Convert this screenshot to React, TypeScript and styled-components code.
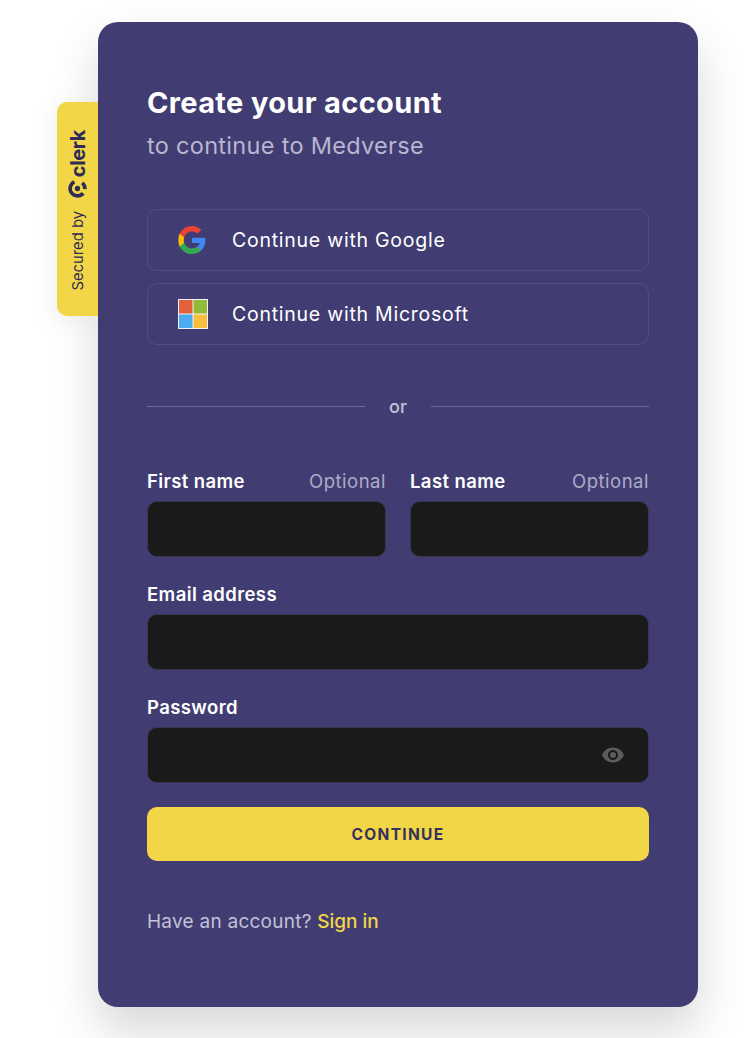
import React from "react";
import styled, { createGlobalStyle } from "styled-components";

const GlobalStyle = createGlobalStyle`
  html, body {
    margin: 0;
    padding: 0;
    background: #fff;
    overflow: hidden;
  }
  body {
    font-family: Inter, "Liberation Sans", sans-serif;
  }
`;

const Page = styled.div`
  height: 1038px;
  padding: 22px 0 0 98px;
  box-sizing: border-box;
`;

const Card = styled.div`
  position: relative;
  width: 600px;
  height: 985px;
  box-sizing: border-box;
  padding: 64px 49px 0;
  background: #413d72;
  border-radius: 20px;
  box-shadow: 0 24px 48px rgba(0, 0, 0, 0.16);
`;

const Badge = styled.div`
  position: absolute;
  left: -41px;
  top: 80px;
  width: 41px;
  height: 214px;
  box-sizing: border-box;
  padding-top: 28px;
  display: flex;
  align-items: center;
  flex-direction: column;
  background: #f3d647;
  border-radius: 10px 0 0 10px;
  color: #2f2c55;
  box-shadow: -6px 4px 24px rgba(0, 0, 0, 0.06);
`;

const BadgeBrand = styled.span`
  writing-mode: vertical-rl;
  transform: rotate(180deg);
  font-size: 20px;
  line-height: 20px;
  font-weight: 700;
  letter-spacing: -0.4px;
`;

const BadgeMark = styled.span`
  display: flex;
  flex-shrink: 0;
  margin: 2px 0 13px;
`;

const BadgeText = styled.span`
  writing-mode: vertical-rl;
  transform: rotate(180deg);
  font-size: 14.8px;
  line-height: 16px;
  white-space: nowrap;
`;

const Title = styled.h1`
  margin: 0;
  font-size: 29px;
  line-height: 34px;
  font-weight: 700;
  letter-spacing: 0.35px;
  color: #fff;
`;

const Subtitle = styled.p`
  margin: 12px 0 0;
  font-size: 23.5px;
  line-height: 28px;
  letter-spacing: 0.3px;
  color: #b9b6d1;
`;

const Socials = styled.div`
  margin-top: 49px;
  display: flex;
  flex-direction: column;
  gap: 12px;
`;

const SocialButton = styled.button`
  display: flex;
  align-items: center;
  gap: 24px;
  height: 62px;
  padding: 0 0 0 30px;
  background: transparent;
  border: 1px solid #524e80;
  border-radius: 10px;
  color: #fff;
  font-family: inherit;
  font-size: 19.5px;
  letter-spacing: 0.75px;
`;

const IconSlot = styled.span`
  display: flex;
  width: 30px;
  justify-content: flex-start;
`;

const Divider = styled.div`
  margin-top: 49px;
  display: flex;
  align-items: center;
  gap: 24px;
  height: 24px;
  color: #c3c1d8;
  font-size: 18px;
  font-weight: 500;
`;

const Rule = styled.span`
  flex: 1;
  height: 1px;
  background: #6c6992;
`;

const Form = styled.div`
  margin-top: 51px;
  display: flex;
  flex-direction: column;
  gap: 25px;
`;

const NameRow = styled.div`
  display: grid;
  grid-template-columns: 1fr 1fr;
  gap: 24px;
`;

const Field = styled.div`
  display: flex;
  flex-direction: column;
  gap: 8px;
`;

const LabelRow = styled.div`
  display: flex;
  justify-content: space-between;
  align-items: baseline;
  height: 24px;
  line-height: 24px;
`;

const Label = styled.label`
  font-size: 18.5px;
  font-weight: 600;
  letter-spacing: 0.4px;
  color: #fff;
`;

const Optional = styled.span`
  font-size: 18.5px;
  letter-spacing: 0.5px;
  color: #aeabc8;
`;

const InputBox = styled.div`
  position: relative;
  height: 56px;
  box-sizing: border-box;
  background: #1a1a1a;
  border: 1px solid #37354f;
  border-radius: 10px;
`;

const EyeButton = styled.span`
  position: absolute;
  right: 23px;
  top: 15px;
  display: flex;
  color: #5c5c5c;
`;

const Submit = styled.button`
  height: 54px;
  margin-top: -1px;
  background: #f3d647;
  border: 0;
  border-radius: 10px;
  color: #35325c;
  font-family: inherit;
  font-size: 15.5px;
  font-weight: 700;
  letter-spacing: 1.3px;
  text-transform: uppercase;
`;

const Footer = styled.p`
  margin: 49px 0 0;
  font-size: 19px;
  line-height: 24px;
  letter-spacing: 0.25px;
  color: #c3c1d8;
`;

const FooterLink = styled.a`
  color: #f3d647;
  font-weight: 500;
  letter-spacing: 0;
`;

const GoogleIcon = () => (
  <svg width="28" height="28" viewBox="0 0 24 24">
    <path fill="#4285F4" d="M23.5 12.3c0-.8-.1-1.6-.2-2.3H12v4.5h6.5c-.3 1.5-1.100 2.700-2.400 3.600v3h3.800c2.300-2.100 3.600-5.200 3.600-8.800z" />
    <path fill="#34A853" d="M12 24c3.200 0 6-1.100 7.900-2.900l-3.800-3c-1.100.7-2.400 1.200-4.100 1.200-3.100 0-5.700-2.100-6.700-4.900H1.400v3.100C3.400 21.400 7.400 24 12 24z" />
    <path fill="#FBBC05" d="M5.300 14.400c-.5-1.500-.5-3.200 0-4.700V6.600H1.400C0 9.200 0 14.800 1.400 17.500l3.900-3.100z" />
    <path fill="#EA4335" d="M12 4.800c1.800 0 3.300.6 4.600 1.800l3.400-3.400C17.900 1.200 15.200 0 12 0 7.400 0 3.400 2.600 1.400 6.600l3.900 3.100c1-2.800 3.600-4.900 6.700-4.900z" />
  </svg>
);

const MicrosoftIcon = () => (
  <svg width="30" height="30" viewBox="0 0 30 30">
    <rect width="30" height="30" fill="#f3f3f3" />
    <rect x="1" y="1" width="13.500" height="13.500" fill="#e2603a" />
    <rect x="15.500" y="1" width="13.500" height="13.500" fill="#92bb3a" />
    <rect x="1" y="15.500" width="13.500" height="13.500" fill="#4cacf0" />
    <rect x="15.500" y="15.500" width="13.500" height="13.500" fill="#f8bf3e" />
  </svg>
);

const ClerkMark = () => (
  <svg width="21" height="19" viewBox="0 0 22 20" fill="none">
    <circle cx="11" cy="10" r="2.800" fill="currentColor" />
    <path d="M7.700 2.930A7.800 7.800 0 1 0 16.980 15.010" stroke="currentColor" strokeWidth="3.800" />
    <path d="M16.010 4.020A7.800 7.800 0 0 1 18.770 10.680" stroke="currentColor" strokeWidth="3.800" />
  </svg>
);

const EyeIcon = () => (
  <svg width="24" height="24" viewBox="0 0 24 24" fill="currentColor">
    <path d="M12 4.500C7 4.500 2.700 7.600 1 12c1.700 4.400 6 7.500 11 7.500s9.300-3.100 11-7.500c-1.700-4.400-6-7.500-11-7.500zM12 17c-2.800 0-5-2.200-5-5s2.200-5 5-5 5 2.200 5 5-2.200 5-5 5zm0-8c-1.700 0-3 1.300-3 3s1.300 3 3 3 3-1.300 3-3-1.300-3-3-3z" />
  </svg>
);

export default function App() {
  return (
    <Page>
      <GlobalStyle />
      <Card>
        <Badge>
          <BadgeBrand>clerk</BadgeBrand>
          <BadgeMark>
            <ClerkMark />
          </BadgeMark>
          <BadgeText>Secured by</BadgeText>
        </Badge>

        <Title>Create your account</Title>
        <Subtitle>to continue to Medverse</Subtitle>

        <Socials>
          <SocialButton>
            <IconSlot>
              <GoogleIcon />
            </IconSlot>
            Continue with Google
          </SocialButton>
          <SocialButton>
            <IconSlot>
              <MicrosoftIcon />
            </IconSlot>
            Continue with Microsoft
          </SocialButton>
        </Socials>

        <Divider>
          <Rule />
          or
          <Rule />
        </Divider>

        <Form>
          <NameRow>
            <Field>
              <LabelRow>
                <Label>First name</Label>
                <Optional>Optional</Optional>
              </LabelRow>
              <InputBox />
            </Field>
            <Field>
              <LabelRow>
                <Label>Last name</Label>
                <Optional>Optional</Optional>
              </LabelRow>
              <InputBox />
            </Field>
          </NameRow>
          <Field>
            <LabelRow>
              <Label>Email address</Label>
            </LabelRow>
            <InputBox />
          </Field>
          <Field>
            <LabelRow>
              <Label>Password</Label>
            </LabelRow>
            <InputBox>
              <EyeButton>
                <EyeIcon />
              </EyeButton>
            </InputBox>
          </Field>
          <Submit>Continue</Submit>
        </Form>

        <Footer>
          Have an account? <FooterLink>Sign in</FooterLink>
        </Footer>
      </Card>
    </Page>
  );
}
